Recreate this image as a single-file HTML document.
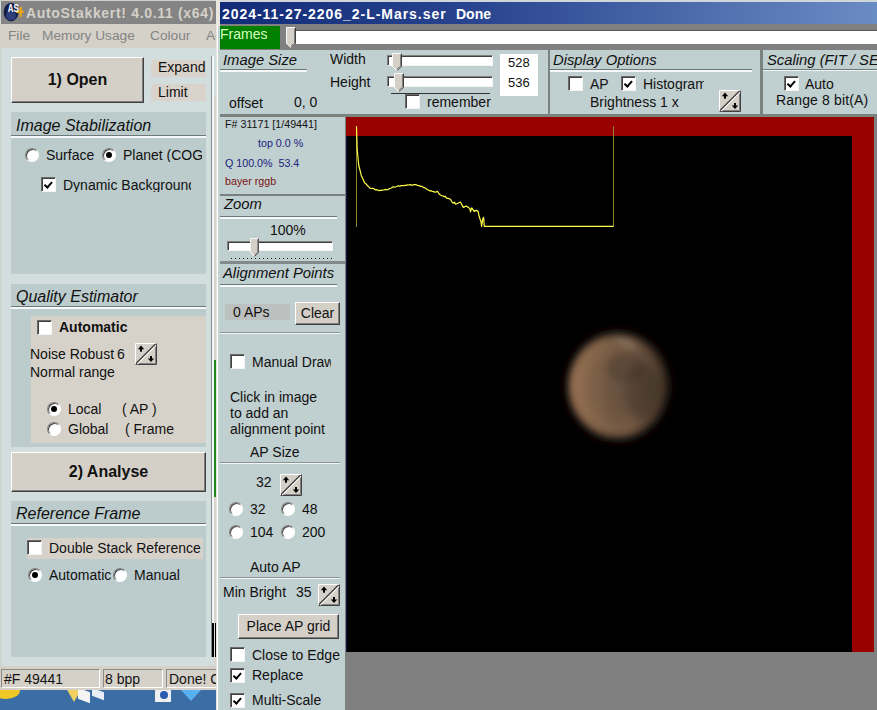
<!DOCTYPE html>
<html><head><meta charset="utf-8">
<style>
html,body{margin:0;padding:0;}
body{width:877px;height:710px;position:relative;overflow:hidden;background:#808080;font-family:"Liberation Sans",sans-serif;font-size:14px;color:#111;}
.a{position:absolute;}
.t{position:absolute;white-space:nowrap;line-height:1;}
.h{position:absolute;white-space:nowrap;line-height:1;font-style:italic;font-size:16px;color:#111;}
.h2{font-size:14.8px;}
.cb{position:absolute;width:13px;height:13px;background:#fff;border:1px solid #6a6a6a;border-right-color:#f4f4f4;border-bottom-color:#f4f4f4;box-shadow:inset 1px 1px 0 #404040;}
.rd{position:absolute;width:12px;height:12px;border-radius:50%;background:#fff;border:1px solid #808080;border-right-color:#fff;border-bottom-color:#fff;box-shadow:inset 1px 1px 0 #404040;}
.rd.on::after{content:"";position:absolute;left:3px;top:3px;width:6px;height:6px;border-radius:50%;background:#000;}
.btn{position:absolute;background:#d4d0c8;border:1px solid #fff;border-right-color:#404040;border-bottom-color:#404040;box-shadow:inset -1px -1px 0 #808080;box-sizing:border-box;text-align:center;}
.sb{border:1px solid #8a8a8a;border-right-color:#fff;border-bottom-color:#fff;box-sizing:border-box;}
.trk{background:#fff;border:1px solid #808080;border-right-color:#f4f4f4;border-bottom-color:#f4f4f4;box-shadow:inset 1px 1px 0 #404040;box-sizing:border-box;}
.ck::after{content:"";position:absolute;left:4px;top:2px;width:2.5px;height:5.5px;border:solid #000;border-width:0 2px 2px 0;transform:rotate(42deg);}
.spin{position:absolute;width:22px;height:22px;}
</style></head><body>

<!-- ================= LEFT WINDOW ================= -->
<div class="a" id="lw" style="left:0;top:0;width:216px;height:691px;background:#d2dede;overflow:hidden;">
  <div class="a" style="left:0;top:0;width:217px;height:1px;background:#d4d0c8;"></div>
  <div class="a" style="left:1px;top:1px;width:215px;height:23px;background:#848484;"></div>
  <div class="t" style="left:26px;top:6px;font-size:14px;letter-spacing:0.68px;font-weight:bold;color:#d4d0c8;">AutoStakkert! 4.0.11 (x64)</div>
  <div class="a" style="left:0;top:24px;width:217px;height:24px;background:#d5d1c9;"></div>
  <div class="t" style="left:8px;top:29px;font-size:13.7px;color:#848484;">File</div>
  <div class="t" style="left:42px;top:29px;font-size:13.7px;color:#848484;">Memory Usage</div>
  <div class="t" style="left:150px;top:29px;font-size:13.7px;color:#848484;">Colour</div>
  <div class="t" style="left:206px;top:29px;font-size:13.7px;color:#848484;">Ac</div>

  <!-- icon -->
  <svg class="a" style="left:0px;top:0px;" width="26" height="24" viewBox="0 0 26 24">
    <ellipse cx="11" cy="12" rx="7.4" ry="9.2" fill="#141c48"/>
    <ellipse cx="11" cy="15.5" rx="5" ry="4.8" fill="#2c3f78"/>
    <path d="M19.7 7 h2.2 v3.6 h1.8 v2.4 h-1.8 v4 h-2.2 v-4 h-3.6 v-2.4 h3.6z" fill="#e8a418"/>
    <text x="7.8" y="12.3" font-family="Liberation Sans" font-weight="bold" font-size="11" textLength="11" lengthAdjust="spacingAndGlyphs" fill="#fff">AS</text>
  </svg>
  <div class="a" style="left:0;top:48px;width:2px;height:620px;background:#cdd5d0;"></div>
  <!-- Open button -->
  <div class="btn" style="left:11px;top:57px;width:133px;height:46px;font-weight:bold;font-size:16px;line-height:43px;">1) Open</div>
  <div class="a" style="left:151px;top:60px;width:55px;height:17px;background:#d9d3cb;"></div>
  <div class="t" style="left:158px;top:60px;font-size:14px;">Expand</div>
  <div class="a" style="left:151px;top:84px;width:55px;height:17px;background:#d9d3cb;"></div>
  <div class="t" style="left:158px;top:85px;font-size:14px;">Limit</div>
  <!-- vertical line right -->
  <div class="a" style="left:211px;top:56px;width:1px;height:601px;background:#868e8e;"></div>
  <div class="a" style="left:212px;top:56px;width:2px;height:601px;background:#f4f7f7;"></div>
  <div class="a" style="left:214px;top:95px;width:2px;height:595px;background:#d9d5cd;"></div>
  <div class="a" style="left:214px;top:360px;width:2px;height:137px;background:#1e8a1e;"></div>
  <div class="a" style="left:212px;top:623px;width:4px;height:34px;background:#000;"></div>
  <div class="a" style="left:214px;top:623px;width:1px;height:34px;background:#ddd;"></div>

  <!-- Image Stabilization -->
  <div class="a" style="left:11px;top:112px;width:195px;height:162px;background:#bccccc;"></div>
  <div class="h" style="left:16px;top:118px;">Image Stabilization</div>
  <div class="a" style="left:11px;top:135px;width:195px;height:1px;background:#6f7878;"></div>
  <div class="a" style="left:11px;top:136px;width:195px;height:2px;background:#f6f9f9;"></div>
  <div class="rd" style="left:25px;top:148px;"></div>
  <div class="t" style="left:46px;top:148px;">Surface</div>
  <div class="rd on" style="left:102px;top:148px;"></div>
  <div class="t" style="left:123px;top:148px;width:79px;overflow:hidden;">Planet (COG)</div>
  <div class="cb ck" style="left:41px;top:177px;"></div>
  <div class="t" style="left:63px;top:178px;width:128px;overflow:hidden;">Dynamic Background</div>

  <!-- Quality Estimator -->
  <div class="a" style="left:11px;top:284px;width:195px;height:163px;background:#bccccc;"></div>
  <div class="h" style="left:16px;top:289px;">Quality Estimator</div>
  <div class="a" style="left:11px;top:306px;width:195px;height:1px;background:#6f7878;"></div>
  <div class="a" style="left:11px;top:307px;width:195px;height:2px;background:#f6f9f9;"></div>
  <div class="a" style="left:31px;top:316px;width:175px;height:127px;background:#d6d2ca;"></div>
  <div class="cb" style="left:37px;top:320px;"></div>
  <div class="t" style="left:59px;top:320px;font-weight:bold;">Automatic</div>
  <div class="t" style="left:30px;top:347px;">Noise Robust</div>
  <div class="t" style="left:117px;top:347px;">6</div>
  <svg class="a" style="left:135px;top:343px;" width="22" height="22" viewBox="0 0 22 22"><rect x="0" y="0" width="22" height="22" fill="#d4d0c8"/><path d="M0.5 21.5 V0.5 H21.5" stroke="#fff" fill="none"/><path d="M21.5 0.5 V21.5 H0.5" stroke="#404040" fill="none"/><path d="M20.5 1.5 V20.5 H1.5" stroke="#808080" fill="none"/><path d="M2 21 L21 2" stroke="#fff" stroke-width="1.2"/><path d="M1 20.5 L20.5 1" stroke="#3a3a3a" stroke-width="1.2"/><rect x="5" y="5.5" width="2" height="3.2" fill="#000"/><path d="M2.8 6.2 L6 2.6 L9.2 6.2Z" fill="#000"/><rect x="15" y="13" width="2" height="3" fill="#000"/><path d="M12.8 15.4 L16 19 L19.2 15.4Z" fill="#000"/></svg>
  <div class="t" style="left:30px;top:365px;">Normal range</div>
  <div class="rd on" style="left:47px;top:402px;"></div>
  <div class="t" style="left:68px;top:402px;">Local</div>
  <div class="t" style="left:122px;top:402px;">( AP )</div>
  <div class="rd" style="left:47px;top:422px;"></div>
  <div class="t" style="left:68px;top:422px;">Global</div>
  <div class="t" style="left:125px;top:422px;">( Frame</div>

  <!-- Analyse -->
  <div class="btn" style="left:11px;top:452px;width:195px;height:40px;font-weight:bold;font-size:16px;line-height:37px;">2) Analyse</div>

  <!-- Reference Frame -->
  <div class="a" style="left:11px;top:501px;width:195px;height:156px;background:#bccccc;"></div>
  <div class="h" style="left:16px;top:506px;">Reference Frame</div>
  <div class="a" style="left:11px;top:523px;width:195px;height:1px;background:#6f7878;"></div>
  <div class="a" style="left:11px;top:524px;width:195px;height:2px;background:#f6f9f9;"></div>
  <div class="a" style="left:27px;top:538px;width:176px;height:21px;background:#d6d2ca;"></div>
  <div class="cb" style="left:27px;top:540px;"></div>
  <div class="t" style="left:49px;top:541px;">Double Stack Reference</div>
  <div class="rd on" style="left:28px;top:568px;"></div>
  <div class="t" style="left:49px;top:568px;">Automatic</div>
  <div class="rd" style="left:113px;top:568px;"></div>
  <div class="t" style="left:134px;top:568px;">Manual</div>

  <!-- status bar -->
  <div class="a" style="left:0;top:666px;width:217px;height:24px;background:#d5d1c9;"></div>
  <div class="a sb" style="left:1px;top:669px;width:99px;height:19px;"></div>
  <div class="t" style="left:4px;top:672px;">#F 49441</div>
  <div class="a sb" style="left:103px;top:669px;width:60px;height:19px;"></div>
  <div class="t" style="left:105px;top:672px;">8 bpp</div>
  <div class="a sb" style="left:166px;top:669px;width:60px;height:19px;"></div>
  <div class="t" style="left:169px;top:672px;">Done! C</div>
</div>


<!-- desktop strip -->
<div class="a" style="left:0;top:690px;width:217px;height:20px;background:#3a6ea5;overflow:hidden;">
  <div class="a" style="left:-8px;top:-8px;width:28px;height:17px;border-radius:50%;background:#f0c828;"></div>
  <div class="a" style="left:66px;top:-2px;width:0;height:0;border-left:8px solid transparent;border-right:8px solid transparent;border-top:14px solid #f0d060;"></div>
  <div class="a" style="left:78px;top:0;width:12px;height:11px;background:#f4f4f4;transform:skewY(20deg);"></div>
  <div class="a" style="left:92px;top:0;width:12px;height:8px;background:#e8ecf4;transform:skewY(20deg);"></div>
  <div class="a" style="left:155px;top:0;width:16px;height:12px;background:#f0f0f0;"></div>
  <div class="a" style="left:160px;top:1px;width:8px;height:8px;border-radius:50%;background:#2a5cb0;"></div>
  <div class="a" style="left:181px;top:0;width:0;height:0;border-left:10px solid transparent;border-right:10px solid transparent;border-top:11px solid #58b0f0;"></div>
</div>
<div class="a" style="left:216px;top:0;width:1px;height:710px;background:#e4e4de;z-index:5;"></div>
<div class="a" style="left:218px;top:0;width:2px;height:710px;background:#c6d3d3;z-index:5;"></div>
<div class="a" style="left:217px;top:0;width:1px;height:710px;background:#fff;z-index:6;"></div>
<div class="a" style="left:216px;top:0;width:4px;height:26px;background:#e9e7df;z-index:7;"></div>
<!-- ================= RIGHT WINDOW ================= -->
<div class="a" id="rw" style="left:219px;top:0;width:658px;height:710px;background:#c3d1d1;overflow:hidden;">

  <!-- title bar -->
  <div class="a" style="left:0;top:0;width:658px;height:2px;background:#d0d6da;"></div>
  <div class="a" style="left:1px;top:2px;width:657px;height:22px;background:linear-gradient(90deg,#122b78 0%,#2a4690 40%,#6a8cc4 100%);"></div>
  <div class="t" style="left:3px;top:7px;font-size:14px;letter-spacing:0.96px;font-weight:bold;color:#fff;">2024-11-27-2206_2-L-Mars.ser</div>
  <div class="t" style="left:237px;top:7px;font-size:14px;font-weight:bold;color:#fff;">Done</div>
  <!-- frames row -->
  <div class="a" style="left:0;top:24px;width:658px;height:26px;background:#808080;"></div>
  <div class="a" style="left:1px;top:26px;width:60px;height:23px;background:#007f00;"></div>
  <div class="t" style="left:1px;top:27px;font-size:14px;color:#d8ffc0;">Frames</div>
  <div class="a" style="left:76px;top:30px;width:600px;height:13px;background:#fff;border-top:1px solid #555;border-left:1px solid #555;"></div>
  <svg class="a" style="left:67px;top:27px;" width="10" height="21" viewBox="0 0 10 21"><path d="M0.5 0.5 H9.5 V16.5 L5.0 20.5 L0.5 16.5Z" fill="#d4d0c8" stroke="#f8f8f8"/><path d="M9.5 0.5 V16.5 L5.0 20.5" fill="none" stroke="#404040"/><path d="M8.5 1.5 V16 L5.0 19" fill="none" stroke="#808080"/></svg>

  <!-- top options row -->
  <div class="a" style="left:0;top:50px;width:658px;height:65px;background:#c0cfcf;"></div>
  <div class="h h2" style="left:4px;top:53px;">Image Size</div>
  <div class="a" style="left:1px;top:69px;width:87px;height:1px;background:#6f7878;"></div>
  <div class="a" style="left:1px;top:70px;width:87px;height:2px;background:#f6f9f9;"></div>
  <div class="t" style="left:111px;top:52px;">Width</div>
  <div class="t" style="left:111px;top:75px;">Height</div>
  <div class="t" style="left:10px;top:96px;">offset</div>
  <div class="t" style="left:75px;top:95px;">0, 0</div>
  <!-- sliders -->
  <div class="a trk" style="left:168px;top:55px;width:106px;height:11px;"></div>
  <svg class="a" style="left:173px;top:53px;" width="10" height="18" viewBox="0 0 10 18"><path d="M0.5 0.5 H9.5 V13.5 L5.0 17.5 L0.5 13.5Z" fill="#d4d0c8" stroke="#f8f8f8"/><path d="M9.5 0.5 V13.5 L5.0 17.5" fill="none" stroke="#404040"/><path d="M8.5 1.5 V13 L5.0 16" fill="none" stroke="#808080"/></svg>
  <div class="a trk" style="left:168px;top:76px;width:106px;height:11px;"></div>
  <svg class="a" style="left:175px;top:73px;" width="10" height="19" viewBox="0 0 10 19"><path d="M0.5 0.5 H9.5 V14.5 L5.0 18.5 L0.5 14.5Z" fill="#d4d0c8" stroke="#f8f8f8"/><path d="M9.5 0.5 V14.5 L5.0 18.5" fill="none" stroke="#404040"/><path d="M8.5 1.5 V14 L5.0 17" fill="none" stroke="#808080"/></svg>
  <div class="a" style="left:172px;top:93px;width:99px;height:1px;background:#333;"></div>
  <div class="cb" style="left:186px;top:94px;"></div>
  <div class="t" style="left:208px;top:95px;">remember</div>
  <div class="a" style="left:281px;top:54px;width:38px;height:42px;background:#fff;"></div>
  <div class="t" style="left:289px;top:56px;font-size:13px;">528</div>
  <div class="t" style="left:289px;top:76px;font-size:13px;">536</div>
  <div class="a" style="left:329px;top:50px;width:2px;height:65px;background:#7b8381;"></div>
  <!-- Display options -->
  <div class="h h2" style="left:334px;top:53px;">Display Options</div>
  <div class="a" style="left:331px;top:69px;width:202px;height:1px;background:#6f7878;"></div>
  <div class="a" style="left:331px;top:70px;width:202px;height:2px;background:#f6f9f9;"></div>
  <div class="cb" style="left:349px;top:76px;"></div>
  <div class="t" style="left:371px;top:77px;">AP</div>
  <div class="cb ck" style="left:402px;top:76px;"></div>
  <div class="t" style="left:424px;top:77px;width:61px;overflow:hidden;">Histogram</div>
  <div class="t" style="left:371px;top:95px;">Brightness 1 x</div>
  <svg class="a" style="left:500px;top:90px;" width="22" height="22" viewBox="0 0 22 22"><rect x="0" y="0" width="22" height="22" fill="#d4d0c8"/><path d="M0.5 21.5 V0.5 H21.5" stroke="#fff" fill="none"/><path d="M21.5 0.5 V21.5 H0.5" stroke="#404040" fill="none"/><path d="M20.5 1.5 V20.5 H1.5" stroke="#808080" fill="none"/><path d="M2 21 L21 2" stroke="#fff" stroke-width="1.2"/><path d="M1 20.5 L20.5 1" stroke="#3a3a3a" stroke-width="1.2"/><rect x="5" y="5.5" width="2" height="3.2" fill="#000"/><path d="M2.8 6.2 L6 2.6 L9.2 6.2Z" fill="#000"/><rect x="15" y="13" width="2" height="3" fill="#000"/><path d="M12.8 15.4 L16 19 L19.2 15.4Z" fill="#000"/></svg>
  <div class="a" style="left:541px;top:50px;width:3px;height:65px;background:#7b8381;"></div>
  <!-- Scaling -->
  <div class="h h2" style="left:548px;top:53px;">Scaling (FIT / SE</div>
  <div class="a" style="left:544px;top:69px;width:120px;height:1px;background:#6f7878;"></div>
  <div class="a" style="left:544px;top:70px;width:120px;height:1px;background:#f0f5f5;"></div>
  <div class="cb ck" style="left:565px;top:76px;"></div>
  <div class="t" style="left:586px;top:77px;">Auto</div>
  <div class="t" style="left:557px;top:93px;letter-spacing:0.15px;">Range 8 bit(A)</div>
  <div class="a" style="left:0;top:114px;width:658px;height:3px;background:#7b8381;"></div>

  <!-- left column -->
  <div class="a" style="left:0;top:117px;width:126px;height:593px;background:#c0cfcf;"></div>
  <div class="t" style="left:6px;top:119px;font-size:10.7px;">F# 31171 [1/49441]</div>
  <div class="t" style="left:39px;top:138px;font-size:10.7px;color:#1a237e;">top 0.0 %</div>
  <div class="t" style="left:6px;top:158px;font-size:10.7px;color:#1a237e;">Q 100.0%&nbsp; 53.4</div>
  <div class="t" style="left:6px;top:176px;font-size:10.7px;color:#7b1515;">bayer rggb</div>
  <div class="a" style="left:1px;top:194px;width:125px;height:2px;background:#788080;"></div>
  <div class="h h2" style="left:5px;top:197px;">Zoom</div>
  <div class="a" style="left:1px;top:216px;width:117px;height:1px;background:#6f7878;"></div>
  <div class="a" style="left:1px;top:217px;width:117px;height:2px;background:#f6f9f9;"></div>
  <div class="t" style="left:51px;top:223px;">100%</div>
  <div class="a trk" style="left:8px;top:241px;width:106px;height:10px;"></div>
  <svg class="a" style="left:31px;top:238px;" width="9" height="19" viewBox="0 0 10 19" preserveAspectRatio="none"><path d="M0.5 0.5 H9.5 V14.5 L5.0 18.5 L0.5 14.5Z" fill="#d4d0c8" stroke="#f8f8f8"/><path d="M9.5 0.5 V14.5 L5.0 18.5" fill="none" stroke="#404040"/><path d="M8.5 1.5 V14 L5.0 17" fill="none" stroke="#808080"/></svg>
  <div class="a" style="left:12px;top:258px;width:101px;height:1px;background:repeating-linear-gradient(90deg,#111 0 1.4px,transparent 1.4px 4px);"></div>
  <div class="a" style="left:1px;top:261px;width:125px;height:3px;background:#828a8a;"></div>
  <div class="h h2" style="left:4px;top:266px;">Alignment Points</div>
  <div class="a" style="left:1px;top:284px;width:117px;height:1px;background:#6f7878;"></div>
  <div class="a" style="left:1px;top:285px;width:117px;height:2px;background:#f6f9f9;"></div>
  <div class="a" style="left:6px;top:304px;width:65px;height:16px;background:#bcc1c0;"></div>
  <div class="t" style="left:14px;top:305px;">0 APs</div>
  <div class="btn" style="left:76px;top:302px;width:45px;height:23px;line-height:20px;">Clear</div>
  <div class="a" style="left:1px;top:332px;width:120px;height:1px;background:#8a9494;"></div>
  <div class="a" style="left:1px;top:333px;width:120px;height:1px;background:#f0f5f5;"></div>
  <div class="cb" style="left:11px;top:354px;"></div>
  <div class="t" style="left:33px;top:355px;width:79px;overflow:hidden;">Manual Draw</div>
  <div class="t" style="left:11px;top:390px;">Click in image</div>
  <div class="t" style="left:11px;top:406px;">to add an</div>
  <div class="t" style="left:11px;top:422px;">alignment point</div>
  <div class="t" style="left:31px;top:445px;">AP Size</div>
  <div class="a" style="left:1px;top:462px;width:120px;height:1px;background:#8a9494;"></div>
  <div class="a" style="left:1px;top:463px;width:120px;height:1px;background:#f0f5f5;"></div>
  <div class="t" style="left:37px;top:475px;">32</div>
  <svg class="a" style="left:61px;top:474px;" width="22" height="22" viewBox="0 0 22 22"><rect x="0" y="0" width="22" height="22" fill="#d4d0c8"/><path d="M0.5 21.5 V0.5 H21.5" stroke="#fff" fill="none"/><path d="M21.5 0.5 V21.5 H0.5" stroke="#404040" fill="none"/><path d="M20.5 1.5 V20.5 H1.5" stroke="#808080" fill="none"/><path d="M2 21 L21 2" stroke="#fff" stroke-width="1.2"/><path d="M1 20.5 L20.5 1" stroke="#3a3a3a" stroke-width="1.2"/><rect x="5" y="5.5" width="2" height="3.2" fill="#000"/><path d="M2.8 6.2 L6 2.6 L9.2 6.2Z" fill="#000"/><rect x="15" y="13" width="2" height="3" fill="#000"/><path d="M12.8 15.4 L16 19 L19.2 15.4Z" fill="#000"/></svg>
  <div class="rd" style="left:10px;top:502px;"></div>
  <div class="t" style="left:31px;top:502px;">32</div>
  <div class="rd" style="left:62px;top:502px;"></div>
  <div class="t" style="left:83px;top:502px;">48</div>
  <div class="rd" style="left:10px;top:525px;"></div>
  <div class="t" style="left:31px;top:525px;">104</div>
  <div class="rd" style="left:62px;top:525px;"></div>
  <div class="t" style="left:83px;top:525px;">200</div>
  <div class="t" style="left:31px;top:560px;">Auto AP</div>
  <div class="a" style="left:1px;top:577px;width:120px;height:1px;background:#8a9494;"></div>
  <div class="a" style="left:1px;top:578px;width:120px;height:1px;background:#f0f5f5;"></div>
  <div class="t" style="left:4px;top:585px;">Min Bright</div>
  <div class="t" style="left:77px;top:585px;">35</div>
  <svg class="a" style="left:99px;top:584px;" width="22" height="22" viewBox="0 0 22 22"><rect x="0" y="0" width="22" height="22" fill="#d4d0c8"/><path d="M0.5 21.5 V0.5 H21.5" stroke="#fff" fill="none"/><path d="M21.5 0.5 V21.5 H0.5" stroke="#404040" fill="none"/><path d="M20.5 1.5 V20.5 H1.5" stroke="#808080" fill="none"/><path d="M2 21 L21 2" stroke="#fff" stroke-width="1.2"/><path d="M1 20.5 L20.5 1" stroke="#3a3a3a" stroke-width="1.2"/><rect x="5" y="5.5" width="2" height="3.2" fill="#000"/><path d="M2.8 6.2 L6 2.6 L9.2 6.2Z" fill="#000"/><rect x="15" y="13" width="2" height="3" fill="#000"/><path d="M12.8 15.4 L16 19 L19.2 15.4Z" fill="#000"/></svg>
  <div class="btn" style="left:19px;top:614px;width:101px;height:25px;line-height:23px;">Place AP grid</div>
  <div class="cb" style="left:11px;top:647px;"></div>
  <div class="t" style="left:33px;top:648px;">Close to Edge</div>
  <div class="cb ck" style="left:11px;top:668px;"></div>
  <div class="t" style="left:33px;top:668px;">Replace</div>
  <div class="cb ck" style="left:11px;top:693px;"></div>
  <div class="t" style="left:33px;top:693px;">Multi-Scale</div>

  <!-- image area -->
  <div class="a" style="left:126px;top:117px;width:540px;height:593px;background:#808080;"></div>
  <div class="a" style="left:127px;top:117px;width:528px;height:535px;background:#990000;"></div>
  <div class="a" style="left:127px;top:136px;width:506px;height:516px;background:#000;"></div>
  <svg class="a" style="left:127px;top:117px;" width="528" height="535" viewBox="346 117 528 535">
    <defs>
      <filter id="mb" x="-30%" y="-30%" width="160%" height="160%"><feGaussianBlur stdDeviation="3.2"/></filter>
      <filter id="mb2" x="-50%" y="-50%" width="200%" height="200%"><feGaussianBlur stdDeviation="6"/></filter>
      <radialGradient id="mg" cx="0.5" cy="0.5" r="0.5">
        <stop offset="0" stop-color="#6a5442"/><stop offset="0.55" stop-color="#715743"/><stop offset="0.82" stop-color="#7e614a"/><stop offset="0.94" stop-color="#6a513c"/><stop offset="1" stop-color="#3e2f20"/>
      </radialGradient>
      <linearGradient id="ms" x1="0" y1="0" x2="1" y2="0">
        <stop offset="0" stop-color="#b48660" stop-opacity="0.5"/><stop offset="0.35" stop-color="#a07850" stop-opacity="0.15"/><stop offset="0.6" stop-color="#000" stop-opacity="0.05"/><stop offset="1" stop-color="#000" stop-opacity="0.45"/>
      </linearGradient>
      <clipPath id="mc"><ellipse cx="619" cy="384" rx="56" ry="58"/></clipPath>
    </defs>
    <ellipse cx="618" cy="386" rx="54" ry="57" fill="#17110c" filter="url(#mb2)"/>
    <g filter="url(#mb)">
      <ellipse cx="618" cy="386" rx="49.5" ry="52.5" fill="url(#mg)"/>
      <ellipse cx="618" cy="386" rx="49.5" ry="52.5" fill="url(#ms)"/>
      <ellipse cx="626" cy="368" rx="20" ry="14" fill="#3c3029" opacity="0.3"/>
      <ellipse cx="642" cy="392" rx="18" ry="28" fill="#2e2620" opacity="0.25"/>
      <ellipse cx="626" cy="343" rx="12" ry="3" fill="#9a9480" opacity="0.4" transform="rotate(20 626 343)"/>
    </g>
    <path d="M356.5 126 V227 M613.5 126 V227" stroke="#8c8226" stroke-width="1" fill="none"/>
    <path d="M356.5 126.2 L357.2 149.8 L358.7 165.0 L361.2 175.2 L364.6 182.8 L366.0 183.9 L367.3 185.5 L368.6 186.7 L369.9 188.1 L371.2 188.5 L372.5 188.3 L373.8 188.6 L375.1 189.8 L376.4 189.7 L377.7 190.0 L379.0 190.8 L380.3 190.2 L381.6 190.4 L382.9 190.0 L384.2 190.0 L385.5 189.4 L386.8 189.8 L388.1 189.6 L389.4 188.6 L390.7 188.2 L392.0 187.6 L393.3 186.7 L394.6 187.2 L395.9 186.8 L397.2 186.2 L398.5 185.7 L399.8 186.3 L401.1 185.6 L402.4 185.7 L403.7 185.7 L405.0 185.4 L406.3 185.4 L407.6 184.8 L408.9 185.0 L410.2 184.6 L411.5 185.1 L412.8 185.2 L414.1 184.5 L415.4 184.7 L416.7 184.9 L418.0 185.7 L419.3 185.5 L420.6 186.4 L421.9 186.3 L423.2 187.4 L424.5 187.8 L425.8 188.4 L427.1 189.5 L428.4 190.0 L429.7 190.8 L431.0 190.7 L432.3 191.4 L433.6 191.6 L434.9 192.2 L436.2 192.0 L437.5 191.4 L438.8 193.5 L440.1 194.7 L441.4 195.5 L442.7 195.8 L444.0 196.7 L445.3 196.4 L446.6 198.2 L447.9 198.4 L449.2 198.7 L450.5 199.3 L451.8 201.8 L453.1 203.1 L454.4 202.2 L455.7 204.2 L460.4 202.0 L463.3 207.4 L466.3 206.0 L469.8 208.4 L470.5 211.9 L471.7 207.9 L474.2 211.4 L476.2 210.4 L478.1 211.4 L479.1 216.3 L481.1 222.2 L481.6 226.4 L482.6 219.3 L483.6 217.3 L484.3 226.4 L613.5 226.4" stroke="#ffff4a" stroke-width="1.2" fill="none" stroke-linejoin="round"/>
    <path d="M346.5 136 V652" stroke="#1a2a8a" stroke-width="1" stroke-dasharray="1 1" fill="none"/>
  </svg>
</div>

</body></html>
